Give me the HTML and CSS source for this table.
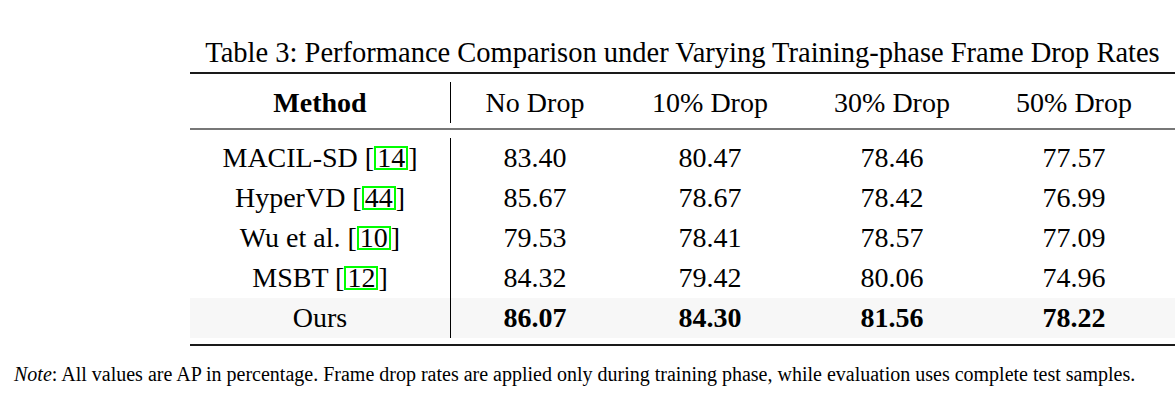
FILE: index.html
```html
<!DOCTYPE html>
<html lang="en">
<head>
<meta charset="utf-8">
<title>Table 3</title>
<link rel="stylesheet" href="styles.css">
</head>
<body>
<div class="page">
  <div class="tablewrap">
    <div class="caption">Table 3: Performance Comparison under Varying Training-phase Frame Drop Rates</div>
    <div class="table">
      <div class="head-wrap">
        <div class="row head">
          <div class="cell method">Method</div>
          <div class="cell first">No Drop</div>
          <div class="cell">10% Drop</div>
          <div class="cell">30% Drop</div>
          <div class="cell last">50% Drop</div>
        </div>
      </div>
      <div class="body">
        <div class="row">
          <div class="cell method">MACIL-SD [<span class="cite">14</span>]</div>
          <div class="cell first">83.40</div>
          <div class="cell">80.47</div>
          <div class="cell">78.46</div>
          <div class="cell last">77.57</div>
        </div>
        <div class="row">
          <div class="cell method">HyperVD [<span class="cite">44</span>]</div>
          <div class="cell first">85.67</div>
          <div class="cell">78.67</div>
          <div class="cell">78.42</div>
          <div class="cell last">76.99</div>
        </div>
        <div class="row">
          <div class="cell method">Wu et al. [<span class="cite">10</span>]</div>
          <div class="cell first">79.53</div>
          <div class="cell">78.41</div>
          <div class="cell">78.57</div>
          <div class="cell last">77.09</div>
        </div>
        <div class="row">
          <div class="cell method">MSBT [<span class="cite">12</span>]</div>
          <div class="cell first">84.32</div>
          <div class="cell">79.42</div>
          <div class="cell">80.06</div>
          <div class="cell last">74.96</div>
        </div>
        <div class="row ours">
          <div class="cell method plain">Ours</div>
          <div class="cell first best">86.07</div>
          <div class="cell best">84.30</div>
          <div class="cell best">81.56</div>
          <div class="cell last best">78.22</div>
        </div>
      </div>
    </div>
  </div>
  <p class="note"><em>Note</em>: All values are AP in percentage. Frame drop rates are applied only during training phase, while evaluation uses complete test samples.</p>
</div>
</body>
</html>
```
FILE: styles.css
```css
html, body {
  margin: 0;
  padding: 0;
  background: #ffffff;
  overflow: hidden;
}

body {
  font-family: "Liberation Serif", "Times New Roman", serif;
  color: #000000;
}

.page {
  padding-top: 36px;
}

.tablewrap {
  margin-left: 190px;
  width: 985px;
}

.caption {
  font-size: 28.5px;
  line-height: 34px;
  text-align: center;
  white-space: nowrap;
  margin-bottom: 2px;
}

.table {
  border-top: 2px solid #1a1a1a;
  border-bottom: 2px solid #1a1a1a;
}

.head-wrap {
  padding: 8px 0 5px;
  border-bottom: 2px solid #777777;
}

.row {
  display: grid;
  grid-template-columns: 260px 169px 182px 182px 1fr;
  font-size: 28px;
  line-height: 40px;
}

.head {
  line-height: 41px;
}

.head .method {
  font-weight: bold;
}

.cell {
  text-align: center;
  white-space: nowrap;
}

.cell.first {
  border-left: 1px solid #000000;
}

.cell.last {
  padding-right: 10px;
}

.body {
  padding: 8px 0 6px;
}

.ours {
  background: #f7f7f7;
}

.best {
  font-weight: bold;
}

.cite {
  display: inline-block;
  border: 2px solid #00ff00;
  line-height: 20px;
  padding: 0 1px;
}

.note {
  margin: 16px 0 0 14px;
  font-size: 20px;
  line-height: 24px;
  white-space: nowrap;
}
```
